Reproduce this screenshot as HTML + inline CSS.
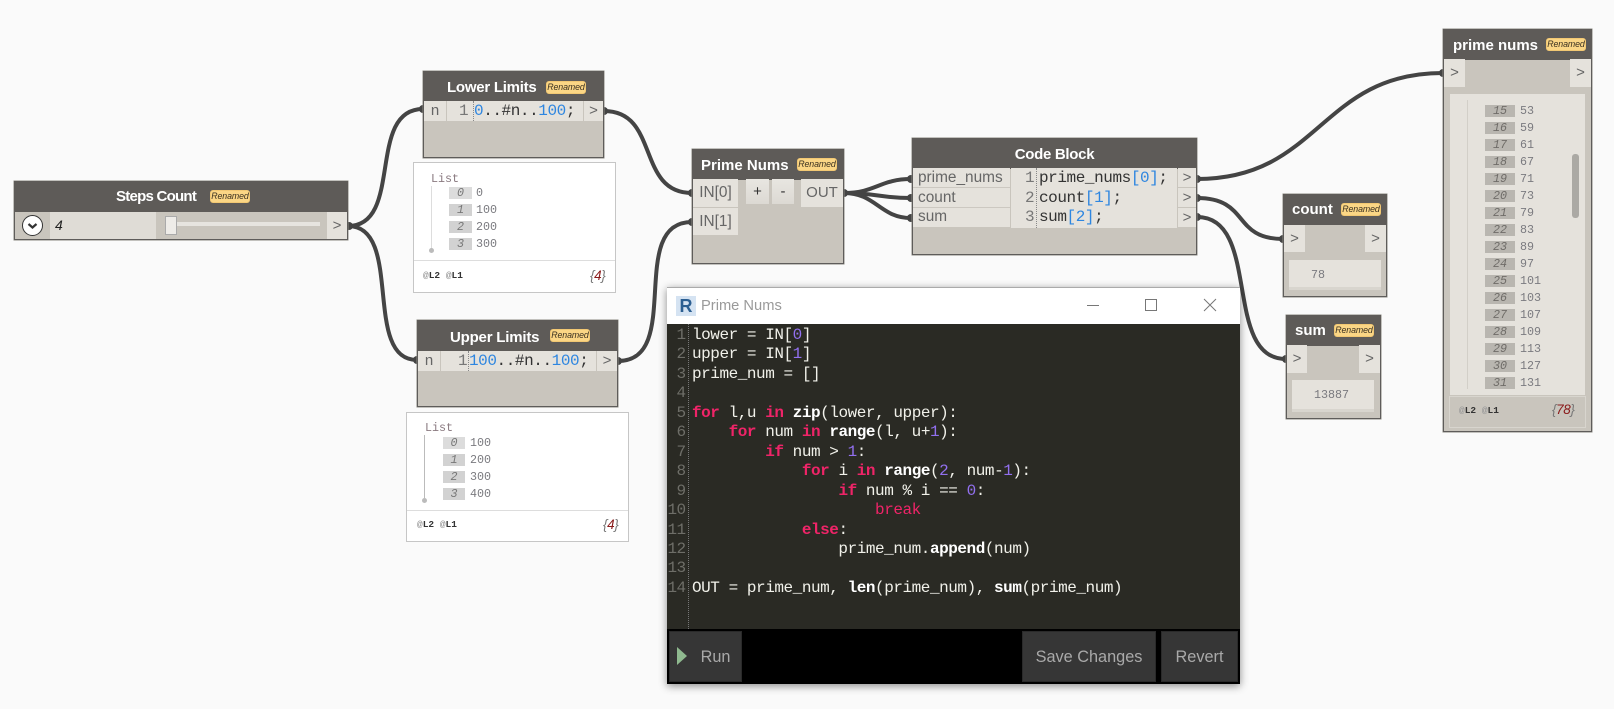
<!DOCTYPE html>
<html><head><meta charset="utf-8"><style>
html,body{margin:0;padding:0;background:#fafafa}
body{position:relative;width:1614px;height:709px;overflow:hidden;font-family:"Liberation Sans",sans-serif}
div{position:absolute;box-sizing:border-box;white-space:nowrap}
.node{background:#c9c5bd;border:1px solid #5e5c5a;box-shadow:0 0 0 .5px #8a8880}
.hd{background:#5e5b58;left:-1px;right:-1px;top:-1px}
.ti{color:#fff;font-weight:bold;font-size:15px;line-height:20px}
.bd{background:#fbd685;border-radius:3px;font-style:italic;font-size:8.8px;height:13px;text-align:center;color:#3a3020;border:1px solid #f2c873;line-height:11px;overflow:hidden;letter-spacing:-.1px}
.pt{background:#e5e2dc;color:#666;font-size:15px}
.ui{color:#666;font-size:15.4px;line-height:20px}
.m{font-family:"Liberation Mono",monospace}
.c{font-family:"Liberation Mono",monospace;font-size:16px;letter-spacing:-.42px;line-height:20px;color:#333}
.b{color:#2e86e0}
.gt{color:#777}
.dot{border-left:1px dotted #888}
.pv{background:#fff;border:1px solid #c6c6c6}
.ix{background:#d2d2d2;font:italic 11.7px/12px "Liberation Mono",monospace;color:#777;text-align:center;height:12px}
.va{font:11.7px/12px "Liberation Mono",monospace;color:#7a7a7f}
.ft{font:bold 9.5px/12px "Liberation Mono",monospace;color:#333}
.ft i{color:#999;font-style:normal}
.cn{font:italic 13.5px/14px "Liberation Sans",sans-serif;color:#777;letter-spacing:-.4px}
.cn b{font-weight:normal;color:#8a1a1a}
.ed{font:16px/19.45px "Liberation Mono",monospace;letter-spacing:-.45px;color:#f1f1ea;white-space:pre}
.ed b{color:#fff}
.ed u{text-decoration:none;font-weight:bold;color:#ef2468}
.ed s{text-decoration:none;color:#9270f0}
.ed em{font-style:normal;color:#ef2468}
.btn{background:#363636;border:1px solid #2a2a2a;color:#a9a9a9;font-size:16.3px;line-height:50px;text-align:center}
.ix2{background:#b9b6b0;font:italic 11.7px/12px "Liberation Mono",monospace;color:#6f6c68;text-align:center;height:12px}
</style></head><body>

<svg style="position:absolute;left:0;top:0" width="1614" height="709">
<g fill="none" stroke="#444" stroke-width="4">
<path d="M348 226C404 226 366 109 423 109"/>
<path d="M348 226C404 226 362 360 417 360"/>
<path d="M604 111C660 111 636 193 692 193"/>
<path d="M618 361C684 361 626 222 692 222"/>
<path d="M844 193C876 193 880 179 911 179"/>
<path d="M844 193C876 193 880 198 911 198"/>
<path d="M844 193C876 193 880 218 911 218"/>
<path d="M1197 179C1320 179 1320 73 1443 73"/>
<path d="M1197 198C1250 198 1232 239 1283 239"/>
<path d="M1197 217C1262 217 1222 359 1286 359"/>
</g>
<g fill="#444">
<circle cx="349" cy="226" r="4"/><circle cx="423" cy="109" r="4"/><circle cx="417" cy="360" r="4"/>
<circle cx="604" cy="111" r="4"/><circle cx="618" cy="361" r="4"/><circle cx="692" cy="193" r="4"/><circle cx="692" cy="222" r="4"/>
<circle cx="844" cy="193" r="4"/><circle cx="911" cy="179" r="4"/><circle cx="911" cy="198" r="4"/><circle cx="911" cy="218" r="4"/>
<circle cx="1197" cy="179" r="4"/><circle cx="1197" cy="198" r="4"/><circle cx="1197" cy="217" r="4"/>
<circle cx="1283" cy="239" r="4"/><circle cx="1286" cy="359" r="4"/><circle cx="1443" cy="73" r="4"/>
</g>
</svg>

<!-- Steps Count -->
<div class="node" style="left:14px;top:181px;width:334px;height:59px">
 <div class="hd" style="height:31px"></div>
 <div class="ti" style="left:101px;top:5px;letter-spacing:-.75px">Steps Count</div>
 <div class="bd" style="left:195px;top:8px;width:40px">Renamed</div>
 <div style="left:35px;top:30px;width:106px;height:27px;background:#dfdcd6"></div>
 <div style="left:7px;top:33px;width:21px;height:21px;border-radius:50%;background:#fff;border:1.5px solid #333"></div>
 <svg style="position:absolute;left:7px;top:33px" width="21" height="21"><path d="M6.5 9l4 3.5 4-3.5" fill="none" stroke="#333" stroke-width="2.2"/></svg>
 <div style="left:40px;top:33px;font-size:14px;line-height:20px;font-style:italic;color:#222">4</div>
 <div style="left:150px;top:40px;width:155px;height:4px;background:#e6e4df"></div>
 <div style="left:150px;top:34px;width:12px;height:19px;background:#eeece8;border:1px solid #aaa"></div>
 <div class="pt" style="left:312px;top:30px;width:20px;height:27px;line-height:27px;text-align:center">&gt;</div>
</div>

<!-- Lower Limits -->
<div class="node" style="left:423px;top:71px;width:181px;height:87px">
 <div class="hd" style="height:30px"></div>
 <div class="ti" style="left:23px;top:6px;letter-spacing:-.25px">Lower Limits</div>
 <div class="bd" style="left:122px;top:9px;width:40px">Renamed</div>
 <div class="pt" style="left:0;top:29px;width:22px;height:20px;text-align:center;line-height:20px">n</div>
 <div style="left:23px;top:29px;width:136px;height:20px;background:#e5e2dc"></div>
 <div class="c gt" style="left:35px;top:29px">1</div>
 <div class="dot" style="left:49px;top:29px;height:20px"></div>
 <div class="c" style="left:50px;top:29px"><span class="b">0</span>..#n..<span class="b">100</span>;</div>
 <div class="pt" style="left:160px;top:29px;width:19px;height:20px;line-height:20px;text-align:center">&gt;</div>
</div>

<!-- Preview 1 -->
<div class="pv" style="left:413px;top:162px;width:203px;height:131px">
 <div class="m" style="left:17px;top:9px;font-size:11.7px;line-height:14px;color:#8a7a80">List</div>
 <div style="left:17px;top:23px;width:1px;height:63px;background:#ddd"></div>
 <div style="left:15px;top:85px;width:5px;height:5px;border-radius:50%;background:#bbb"></div>
 <div class="ix" style="left:35px;top:24px;width:23px;background:#dcdcdc">0</div><div class="va" style="left:62px;top:24px">0</div>
 <div class="ix" style="left:35px;top:41px;width:23px">1</div><div class="va" style="left:62px;top:41px">100</div>
 <div class="ix" style="left:35px;top:58px;width:23px">2</div><div class="va" style="left:62px;top:58px">200</div>
 <div class="ix" style="left:35px;top:75px;width:23px">3</div><div class="va" style="left:62px;top:75px">300</div>
 <div style="left:0;right:0;top:97px;height:1px;background:#ddd"></div>
 <div class="ft" style="left:9px;top:107px"><i>@</i>L2 <i>@</i>L1</div>
 <div class="cn" style="left:176px;top:106px">{<b>4</b>}</div>
</div>

<!-- Upper Limits -->
<div class="node" style="left:417px;top:320px;width:201px;height:87px">
 <div class="hd" style="height:31px"></div>
 <div class="ti" style="left:32px;top:7px;letter-spacing:-.2px">Upper Limits</div>
 <div class="bd" style="left:132px;top:8px;width:40px">Renamed</div>
 <div class="pt" style="left:0;top:30px;width:22px;height:20px;text-align:center;line-height:20px">n</div>
 <div style="left:23px;top:30px;width:155px;height:20px;background:#e5e2dc"></div>
 <div class="c gt" style="left:40px;top:30px">1</div>
 <div class="dot" style="left:50px;top:30px;height:20px"></div>
 <div class="c" style="left:51px;top:30px"><span class="b">100</span>..#n..<span class="b">100</span>;</div>
 <div class="pt" style="left:179px;top:30px;width:20px;height:20px;line-height:20px;text-align:center">&gt;</div>
</div>

<!-- Preview 2 -->
<div class="pv" style="left:406px;top:412px;width:223px;height:130px">
 <div class="m" style="left:18px;top:8px;font-size:11.7px;line-height:14px;color:#8a7a80">List</div>
 <div style="left:17px;top:22px;width:1px;height:63px;background:#bbb"></div>
 <div style="left:15px;top:85px;width:5px;height:5px;border-radius:50%;background:#bbb"></div>
 <div class="ix" style="left:36px;top:24px;width:22px;background:#dcdcdc">0</div><div class="va" style="left:63px;top:24px">100</div>
 <div class="ix" style="left:36px;top:41px;width:22px">1</div><div class="va" style="left:63px;top:41px">200</div>
 <div class="ix" style="left:36px;top:58px;width:22px">2</div><div class="va" style="left:63px;top:58px">300</div>
 <div class="ix" style="left:36px;top:75px;width:22px">3</div><div class="va" style="left:63px;top:75px">400</div>
 <div style="left:0;right:0;top:97px;height:1px;background:#ddd"></div>
 <div class="ft" style="left:10px;top:106px"><i>@</i>L2 <i>@</i>L1</div>
 <div class="cn" style="left:196px;top:105px">{<b>4</b>}</div>
</div>

<!-- Prime Nums -->
<div class="node" style="left:692px;top:149px;width:152px;height:115px">
 <div class="hd" style="height:31px"></div>
 <div class="ti" style="left:8px;top:6px">Prime Nums</div>
 <div class="bd" style="left:104px;top:8px;width:40px">Renamed</div>
 <div class="pt" style="left:0;top:29px;width:45px;height:28px;line-height:28px;text-align:center;font-size:15.4px">IN[0]</div>
 <div class="pt" style="left:0;top:58px;width:45px;height:27px;line-height:27px;text-align:center;font-size:15.4px">IN[1]</div>
 <div class="pt" style="left:53px;top:29px;width:23px;height:25px;line-height:25px;text-align:center;background:linear-gradient(#e8e6e1,#dcd9d3);color:#333">+</div>
 <div class="pt" style="left:79px;top:29px;width:22px;height:25px;line-height:25px;text-align:center;background:linear-gradient(#e8e6e1,#dcd9d3);color:#333">-</div>
 <div class="pt" style="left:108px;top:29px;width:42px;height:28px;line-height:28px;text-align:center">OUT</div>
</div>

<!-- Code Block -->
<div class="node" style="left:912px;top:138px;width:285px;height:117px">
 <div class="hd" style="height:31px"></div>
 <div class="ti" style="left:0;right:0;top:6px;text-align:center;letter-spacing:-.3px">Code Block</div>
 <div class="pt" style="left:0;top:29px;width:97px;height:59px"></div>
 <div style="left:0;top:48px;width:97px;height:1px;background:#ccc8c1"></div>
 <div style="left:0;top:68px;width:97px;height:1px;background:#ccc8c1"></div>
 <div class="ui" style="left:5px;top:29px">prime_nums</div>
 <div class="ui" style="left:5px;top:49px">count</div>
 <div class="ui" style="left:5px;top:68px">sum</div>
 <div style="left:98px;top:29px;width:166px;height:60px;background:#e5e2dc"></div>
 <div class="c gt" style="left:112px;top:29px">1</div><div class="c gt" style="left:112px;top:49px">2</div><div class="c gt" style="left:112px;top:68px">3</div>
 <div class="dot" style="left:123px;top:29px;height:60px"></div>
 <div class="c" style="left:126px;top:29px">prime_nums<span class="b">[0]</span>;</div>
 <div class="c" style="left:126px;top:49px">count<span class="b">[1]</span>;</div>
 <div class="c" style="left:126px;top:68px">sum<span class="b">[2]</span>;</div>
 <div class="pt" style="left:265px;top:29px;width:18px;height:19px;line-height:19px;text-align:center">&gt;</div>
 <div class="pt" style="left:265px;top:49px;width:18px;height:19px;line-height:19px;text-align:center">&gt;</div>
 <div class="pt" style="left:265px;top:69px;width:18px;height:19px;line-height:19px;text-align:center">&gt;</div>
</div>

<!-- count -->
<div class="node" style="left:1283px;top:194px;width:104px;height:103px">
 <div class="hd" style="height:31px"></div>
 <div class="ti" style="left:8px;top:5px">count</div>
 <div class="bd" style="left:57px;top:8px;width:40px">Renamed</div>
 <div class="pt" style="left:0;top:30px;width:21px;height:27px;line-height:27px;text-align:center">&gt;</div>
 <div class="pt" style="left:81px;top:30px;width:21px;height:27px;line-height:27px;text-align:center">&gt;</div>
 <div style="left:5px;top:65px;width:92px;height:30px;background:#e5e2dc;border-bottom:3px solid #d8d5ce"></div>
 <div class="va" style="left:27px;top:74px">78</div>
</div>

<!-- sum -->
<div class="node" style="left:1286px;top:315px;width:95px;height:104px">
 <div class="hd" style="height:31px"></div>
 <div class="ti" style="left:8px;top:5px">sum</div>
 <div class="bd" style="left:47px;top:8px;width:40px">Renamed</div>
 <div class="pt" style="left:0;top:29px;width:20px;height:28px;line-height:28px;text-align:center">&gt;</div>
 <div class="pt" style="left:72px;top:29px;width:21px;height:28px;line-height:28px;text-align:center">&gt;</div>
 <div style="left:5px;top:64px;width:82px;height:32px;background:#e5e2dc;border-bottom:3px solid #d8d5ce"></div>
 <div class="va" style="left:27px;top:73px">13887</div>
</div>

<!-- prime nums watch -->
<div class="node" style="left:1443px;top:29px;width:149px;height:403px">
 <div class="hd" style="height:31px"></div>
 <div class="ti" style="left:9px;top:6px">prime nums</div>
 <div class="bd" style="left:102px;top:8px;width:40px">Renamed</div>
 <div class="pt" style="left:0;top:29px;width:21px;height:28px;line-height:28px;text-align:center">&gt;</div>
 <div class="pt" style="left:126px;top:29px;width:21px;height:28px;line-height:28px;text-align:center">&gt;</div>
 <div style="left:6px;top:64px;width:135px;height:301px;background:#e5e2dc"></div>
 <div style="left:23px;top:70px;width:1px;height:289px;background:#d2cfc8"></div>
 <div style="left:128px;top:124px;width:7px;height:64px;border-radius:3px;background:#aba9a4"></div>
 <div style="left:5px;top:366px;width:137px;height:32px;border:1px solid #d8d5ce"></div>
 <div class="ft" style="left:15px;top:375px"><i>@</i>L2 <i>@</i>L1</div>
 <div class="cn" style="left:108px;top:373px">{<b>78</b>}</div>

 <div class="ix2" style="left:41px;top:75px;width:30px">15</div><div class="va" style="left:76px;top:75px">53</div>
 <div class="ix2" style="left:41px;top:92px;width:30px">16</div><div class="va" style="left:76px;top:92px">59</div>
 <div class="ix2" style="left:41px;top:109px;width:30px">17</div><div class="va" style="left:76px;top:109px">61</div>
 <div class="ix2" style="left:41px;top:126px;width:30px">18</div><div class="va" style="left:76px;top:126px">67</div>
 <div class="ix2" style="left:41px;top:143px;width:30px">19</div><div class="va" style="left:76px;top:143px">71</div>
 <div class="ix2" style="left:41px;top:160px;width:30px">20</div><div class="va" style="left:76px;top:160px">73</div>
 <div class="ix2" style="left:41px;top:177px;width:30px">21</div><div class="va" style="left:76px;top:177px">79</div>
 <div class="ix2" style="left:41px;top:194px;width:30px">22</div><div class="va" style="left:76px;top:194px">83</div>
 <div class="ix2" style="left:41px;top:211px;width:30px">23</div><div class="va" style="left:76px;top:211px">89</div>
 <div class="ix2" style="left:41px;top:228px;width:30px">24</div><div class="va" style="left:76px;top:228px">97</div>
 <div class="ix2" style="left:41px;top:245px;width:30px">25</div><div class="va" style="left:76px;top:245px">101</div>
 <div class="ix2" style="left:41px;top:262px;width:30px">26</div><div class="va" style="left:76px;top:262px">103</div>
 <div class="ix2" style="left:41px;top:279px;width:30px">27</div><div class="va" style="left:76px;top:279px">107</div>
 <div class="ix2" style="left:41px;top:296px;width:30px">28</div><div class="va" style="left:76px;top:296px">109</div>
 <div class="ix2" style="left:41px;top:313px;width:30px">29</div><div class="va" style="left:76px;top:313px">113</div>
 <div class="ix2" style="left:41px;top:330px;width:30px">30</div><div class="va" style="left:76px;top:330px">127</div>
 <div class="ix2" style="left:41px;top:347px;width:30px">31</div><div class="va" style="left:76px;top:347px">131</div>
</div>

<!-- Python window -->
<div style="left:667px;top:287px;width:573px;height:397px;background:#2a2a24;box-shadow:0 2px 8px rgba(0,0,0,.45);border-top:1px solid #aaa">
 <div style="left:0;top:0;width:573px;height:36px;background:#fff"></div>
 <div style="left:9px;top:8px;width:20px;height:20px;background:#d5e3f2"></div>
 <div style="left:9px;top:8px;width:20px;text-align:center;font-weight:bold;font-size:18px;line-height:20px;color:#2c5f92">R</div>
 <div style="left:34px;top:8px;font-size:14.7px;line-height:20px;color:#9a9a9a">Prime Nums</div>
 <svg style="position:absolute;left:410px;top:6px" width="160" height="26"><g fill="none" stroke="#777" stroke-width="1"><path d="M10 11.5h12"/><rect x="68.5" y="5.5" width="11" height="11"/><path d="M127 5l12 12M139 5l-12 12"/></g></svg>

 <div class="dot" style="left:20.5px;top:36px;height:305px;border-left-color:#777"></div>
 <div class="ed" style="left:0;top:38px;width:18.5px;text-align:right;color:#6e6e68;letter-spacing:-.6px">1
2
3
4
5
6
7
8
9
10
11
12
13
14</div>
 <div class="ed" style="left:25px;top:38px">lower = IN[<s>0</s>]
upper = IN[<s>1</s>]
prime_num = []

<u>for</u> l,u <u>in</u> <b>zip</b>(lower, upper):
    <u>for</u> num <u>in</u> <b>range</b>(l, u+<s>1</s>):
        <u>if</u> num &gt; <s>1</s>:
            <u>for</u> i <u>in</u> <b>range</b>(<s>2</s>, num-<s>1</s>):
                <u>if</u> num % i == <s>0</s>:
                    <em>break</em>
            <u>else</u>:
                prime_num.<b>append</b>(num)

OUT = prime_num, <b>len</b>(prime_num), <b>sum</b>(prime_num)</div>

 <div style="left:0;top:341px;width:573px;height:55px;background:#000"></div>
 <div class="btn" style="left:2px;top:343px;width:73px;height:51px;padding-left:20px">Run</div>
 <div style="left:9.5px;top:359px;width:0;height:0;border-left:10px solid #8fb98f;border-top:9.5px solid transparent;border-bottom:9.5px solid transparent"></div>
 <div class="btn" style="left:355px;top:343px;width:134px;height:51px">Save Changes</div>
 <div class="btn" style="left:494px;top:343px;width:77px;height:51px">Revert</div>
</div>

</body></html>
